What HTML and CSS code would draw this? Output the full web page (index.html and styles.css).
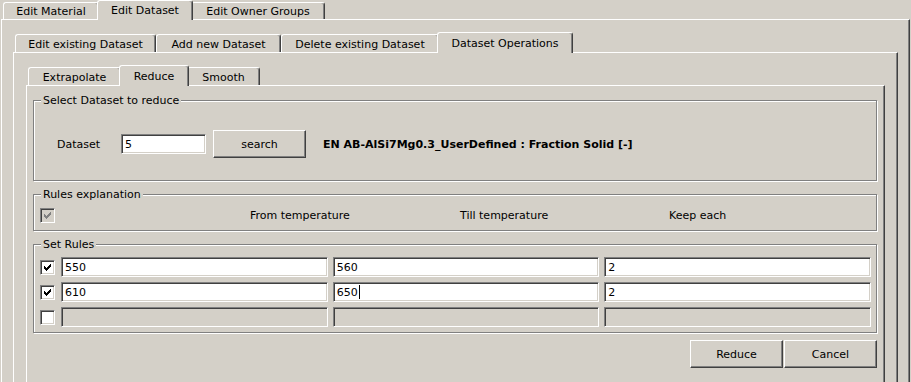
FILE: index.html
```html
<!doctype html>
<html lang="en">
<head>
    <meta charset="UTF-8">
    <title>Reduce Dataset</title>
    <link rel="stylesheet" href="styles.css">
</head>
<body>
<div class="tabctl">
    <div class="strip top">
        <div class="tab t-material">Edit Material</div>
        <div class="tab sel t-dataset">Edit Dataset</div>
        <div class="tab t-owner">Edit Owner Groups</div>
    </div>
    <div class="panel p1">
        <div class="strip">
            <div class="tab t-existing">Edit existing Dataset</div>
            <div class="tab t-new">Add new Dataset</div>
            <div class="tab t-delete">Delete existing Dataset</div>
            <div class="tab sel t-ops">Dataset Operations</div>
        </div>
        <div class="panel p2">
            <div class="strip">
                <div class="tab t-extra">Extrapolate</div>
                <div class="tab sel t-reduce">Reduce</div>
                <div class="tab t-smooth">Smooth</div>
            </div>
            <div class="panel p3">

                <div class="group g-select">
                    <div class="legend">Select Dataset to reduce</div>
                    <div class="row-search">
                        <div class="lbl">Dataset</div>
                        <div class="field f-id">5</div>
                        <div class="btn b-search">search</div>
                        <div class="ds-name">EN AB-AlSi7Mg0.3_UserDefined : Fraction Solid [-]</div>
                    </div>
                </div>

                <div class="group g-explain">
                    <div class="legend">Rules explanation</div>
                    <div class="row-explain">
                        <div class="check dis">
                            <svg width="7" height="7" viewBox="0 0 7 7" shape-rendering="crispEdges"><path d="M6 0h1v1h-1zM5 1h2v1h-2zM0 2h1v1h-1zM4 2h3v1h-3zM0 3h2v1h-2zM3 3h3v1h-3zM0 4h5v1h-5zM1 5h3v1h-3zM2 6h1v1h-1z"/></svg>
                        </div>
                        <div class="head h-from">From temperature</div>
                        <div class="head h-till">Till temperature</div>
                        <div class="head">Keep each</div>
                    </div>
                </div>

                <div class="group g-rules">
                    <div class="legend">Set Rules</div>
                    <div class="rules">
                        <div class="rule">
                            <div class="check">
                                <svg width="7" height="7" viewBox="0 0 7 7" shape-rendering="crispEdges"><path d="M6 0h1v1h-1zM5 1h2v1h-2zM0 2h1v1h-1zM4 2h3v1h-3zM0 3h2v1h-2zM3 3h3v1h-3zM0 4h5v1h-5zM1 5h3v1h-3zM2 6h1v1h-1z"/></svg>
                            </div>
                            <div class="field">550</div>
                            <div class="field">560</div>
                            <div class="field">2</div>
                        </div>
                        <div class="rule">
                            <div class="check">
                                <svg width="7" height="7" viewBox="0 0 7 7" shape-rendering="crispEdges"><path d="M6 0h1v1h-1zM5 1h2v1h-2zM0 2h1v1h-1zM4 2h3v1h-3zM0 3h2v1h-2zM3 3h3v1h-3zM0 4h5v1h-5zM1 5h3v1h-3zM2 6h1v1h-1z"/></svg>
                            </div>
                            <div class="field">610</div>
                            <div class="field">650<span class="caret"></span></div>
                            <div class="field">2</div>
                        </div>
                        <div class="rule">
                            <div class="check"></div>
                            <div class="field off"></div>
                            <div class="field off"></div>
                            <div class="field off"></div>
                        </div>
                    </div>
                </div>

                <div class="buttons">
                    <div class="btn">Reduce</div>
                    <div class="btn">Cancel</div>
                </div>

            </div>
        </div>
    </div>
</div>
</body>
</html>
```

FILE: styles.css
```css
*{
    margin: 0;
    padding: 0;
    box-sizing: border-box;
}
html, body{
    height: 100%;
    overflow: hidden;
}
body{
    background: #d4d0c8;
    color: #000;
    font: 11px/13px "DejaVu Sans", sans-serif;
}

/* tab controls */
.tabctl{
    width: 909px;
    margin-left: 1px;
}
.strip{
    display: flex;
    align-items: flex-end;
    height: 20px;
    padding-left: 2px;
}
.strip.top{
    height: 19px;
}
.tab{
    flex: none;
    height: 18px;
    padding-top: 3px;
    text-align: center;
    white-space: nowrap;
    background: #d4d0c8;
    border: 1px solid;
    border-bottom: 0;
    border-color: #fff #404040 #404040 #fff;
    border-radius: 3px 3px 0 0;
    box-shadow: inset -1px 0 #808080;
}
.tab.sel{
    height: 21px;
    padding-top: 4px;
    margin: 0 -2px -1px;
    z-index: 1;
}
.strip.top .tab{
    height: 17px;
    padding-top: 2px;
}
.strip.top .tab.sel{
    height: 20px;
    padding-top: 3px;
}
.t-material{ width: 96px; }
.t-dataset{ width: 96px; }
.t-owner{ width: 134px; }
.t-existing{ width: 141px; }
.t-new{ width: 125px; }
.t-delete{ width: 158px; }
.t-ops{ width: 136px; }
.t-extra{ width: 93px; }
.t-reduce{ width: 70px; }
.t-smooth{ width: 73px; }

/* the panels run on below the window edge, so no bottom border shows */
.panel{
    border: 1px solid;
    border-bottom: 0;
    border-color: #fff #404040 #404040 #fff;
    box-shadow: inset -1px 0 #808080;
}
.p1{
    padding: 12px 11px 0;
}
.p2{
    padding: 12px 12px 0;
}
.p3{
    padding: 14px 7px 14px 6px;
}

/* group boxes */
.group{
    border: 1px solid #808080;
    box-shadow: 1px 1px 0 #fff, inset 1px 1px 0 #fff;
    margin-bottom: 13px;
}
.legend{
    width: fit-content;
    margin: -7px 0 0 7px;
    padding: 0 2px;
    background: #d4d0c8;
}
.g-select{
    height: 81px;
}
.g-explain{
    height: 37px;
}
.g-rules{
    height: 89px;
    margin-bottom: 0;
}

.row-search{
    display: flex;
    align-items: center;
    height: 28px;
    margin-top: 23px;
    padding-left: 23px;
}
.lbl{
    width: 64px;
}
.f-id{
    width: 85px;
    flex: none;
    margin-right: 7px;
}
.b-search{
    width: 94px;
    margin-right: 17px;
}
.ds-name{
    font-weight: bold;
    white-space: nowrap;
}

.row-explain{
    display: flex;
    align-items: center;
    height: 15px;
    margin-top: 7px;
    padding-left: 6px;
}
.head{
    white-space: nowrap;
}
.h-from{
    width: 210px;
    margin-left: 195px;
}
.h-till{
    width: 209px;
}

.rules{
    display: flex;
    flex-direction: column;
    gap: 5px;
    margin-top: 6px;
    padding: 0 5px 0 6px;
}
.rule{
    display: flex;
    align-items: center;
    gap: 5px;
}
.rule .check{
    margin-right: 1px;
}
.rule .field{
    flex: 1;
}

/* controls */
.field{
    height: 20px;
    display: flex;
    align-items: center;
    padding-left: 3px;
    background: #fff;
    border: 1px solid;
    border-color: #808080 #fff #fff #808080;
    box-shadow: inset 1px 1px #404040, inset -1px -1px #d4d0c8;
}
.field.off{
    background: #d4d0c8;
}
.caret{
    width: 1px;
    height: 14px;
    margin-left: 1px;
    background: #000;
}
.check{
    flex: none;
    width: 15px;
    height: 15px;
    display: flex;
    align-items: center;
    justify-content: center;
    background: #fff;
    border: 1px solid;
    border-color: #808080 #fff #fff #808080;
    box-shadow: inset 1px 1px #404040, inset -1px -1px #d4d0c8;
}
.check svg{
    fill: #000;
}
.check.dis{
    background: #d4d0c8;
}
.check.dis svg{
    fill: #808080;
}
.btn{
    flex: none;
    width: 93px;
    height: 28px;
    display: flex;
    align-items: center;
    justify-content: center;
    border: 1px solid;
    border-color: #fff #404040 #404040 #fff;
    box-shadow: inset -1px -1px #808080;
}
.buttons{
    display: flex;
    justify-content: flex-end;
    gap: 1px;
    margin-top: 7px;
}
```
